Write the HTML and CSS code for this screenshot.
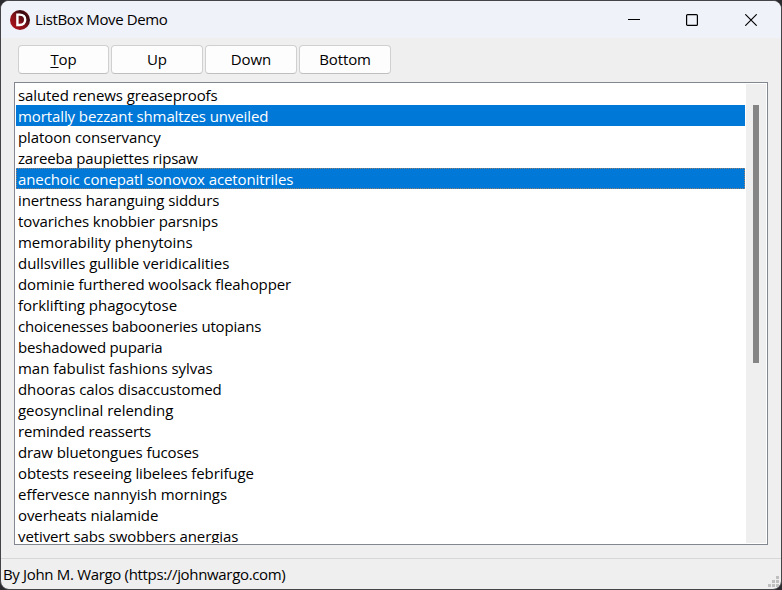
FILE: index.html
```
<!DOCTYPE html>
<html lang="en">
<head>
<meta charset="utf-8">
<title>ListBox Move Demo</title>
<link rel="stylesheet" href="styles.css">
</head>
<body>
<div class="window">
  <header class="titlebar">
    <svg class="logo" width="20" height="20" viewBox="0 0 20 20">
      <defs><linearGradient id="g" x1="0" y1="1" x2="1" y2="0"><stop offset="0" stop-color="#b5121b"/><stop offset=".45" stop-color="#861018"/><stop offset=".75" stop-color="#350b10"/><stop offset="1" stop-color="#a5141c"/></linearGradient></defs>
      <circle cx="10" cy="10" r="10" fill="url(#g)"/>
      <path d="M7.4 4.6V15H9.6C13.2 15 15.2 13.2 15.2 9.8S13.2 4.6 9.6 4.6Z" fill="none" stroke="#fff" stroke-width="2.4"/>
    </svg>
    <h1 class="title">ListBox Move Demo</h1>
    <div class="controls">
      <svg width="12" height="12" viewBox="0 0 12 12"><path d="M0 5.5H12" stroke="#000"/></svg>
      <svg width="12" height="12" viewBox="0 0 12 12"><rect x=".6" y=".6" width="10.8" height="10.8" rx="1" fill="none" stroke="#000" stroke-width="1.2"/></svg>
      <svg width="12" height="12" viewBox="0 0 12 12"><path d="M.3.3 11.7 11.7M11.7.3.3 11.7" stroke="#000" stroke-width="1.15"/></svg>
    </div>
  </header>
  <nav class="toolbar">
    <button class="btn"><span><u>T</u>op</span></button>
    <button class="btn">Up</button>
    <button class="btn">Down</button>
    <button class="btn">Bottom</button>
  </nav>
  <main class="listbox">
    <ul class="items">
      <li>saluted renews greaseproofs</li>
      <li class="selected">mortally bezzant shmaltzes unveiled</li>
      <li>platoon conservancy</li>
      <li class="tight">zareeba paupiettes ripsaw</li>
      <li class="selected focused">anechoic conepatl sonovox acetonitriles</li>
      <li>inertness haranguing siddurs</li>
      <li>tovariches knobbier parsnips</li>
      <li class="loose">memorability phenytoins</li>
      <li class="loose">dullsvilles gullible veridicalities</li>
      <li>dominie furthered woolsack fleahopper</li>
      <li class="loose">forklifting phagocytose</li>
      <li class="tight">choicenesses babooneries utopians</li>
      <li class="tight">beshadowed puparia</li>
      <li class="loose">man fabulist fashions sylvas</li>
      <li>dhooras calos disaccustomed</li>
      <li class="loose">geosynclinal relending</li>
      <li class="tight">reminded reasserts</li>
      <li>draw bluetongues fucoses</li>
      <li>obtests reseeing libelees febrifuge</li>
      <li class="loose">effervesce nannyish mornings</li>
      <li>overheats nialamide</li>
      <li>vetivert sabs swobbers anergias</li>
    </ul>
    <div class="scrollbar"><div class="thumb"></div></div>
  </main>
  <footer class="statusbar">
    <span class="credit">By John M. Wargo (https://johnwargo.com)</span>
    <svg class="grip" width="12" height="12" viewBox="0 0 12 12" fill="#bfbfbf"><path d="M8 0h3v3H8zM4 4h3v3H4zM8 4h3v3H8zM0 8h3v3H0zM4 8h3v3H4zM8 8h3v3H8z"/></svg>
  </footer>
</div>
</body>
</html>
```
FILE: styles.css
```
* { box-sizing: border-box; }
body {
  margin: 0;
  background: #2b2b2f;
  font: 15px/21px "Open Sans", "Noto Sans", sans-serif;
  color: #000;
  overflow: hidden;
}
.window {
  width: 782px;
  height: 590px;
  display: flex;
  flex-direction: column;
  border: 1px solid #444448;
  border-radius: 9px;
  background: #efefef;
  overflow: hidden;
}
.titlebar {
  display: flex;
  flex: 0 0 37px;
  align-items: center;
  padding: 0 24px 0 9px;
  background: #f0f2f9;
}
.logo { margin-right: 5px; }
.title {
  margin: 0;
  font-size: 15px;
  font-weight: 400;
  letter-spacing: -0.4px;
}
.controls {
  display: flex;
  gap: 47px;
  margin-left: auto;
}
.controls svg { display: block; }
.controls svg:first-child { margin-right: -1px; }
.toolbar {
  display: flex;
  gap: 2px;
  padding: 7px 17px 8px;
}
.btn {
  width: 92px;
  height: 29px;
  padding: 0;
  border: 1px solid #d0d0d0;
  border-bottom-color: #bfbfbf;
  border-radius: 4px;
  background: #fdfdfd;
  font: inherit;
  color: inherit;
  letter-spacing: -0.1px;
}
.btn:first-child { width: 91px; }
.btn u { text-underline-offset: 2px; }
.listbox {
  display: flex;
  height: 463px;
  margin: 0 13px;
  padding: 1px;
  border: 1px solid #828790;
  background: #fff;
}
.items {
  flex: 1;
  margin: 0 1px 0 0;
  padding: 0;
  list-style: none;
  overflow: hidden;
  letter-spacing: -0.1px;
}
.items li {
  height: 21px;
  padding-left: 2px;
  line-height: 23px;
  white-space: nowrap;
}
.items .tight { letter-spacing: -0.18px; }
.items .loose { letter-spacing: -0.02px; }
.items .selected { background: #0078d7; color: #fff; }
.items .focused { outline: 1px dotted rgba(255, 135, 40, 0.6); outline-offset: -1px; }
.scrollbar {
  width: 20px;
  padding: 21px 0 0 7px;
  background: #efefef;
}
.thumb { width: 6px; height: 258px; background: #858585; }
.statusbar {
  display: flex;
  height: 31px;
  margin-top: 13px;
  padding-left: 2px;
  border-top: 1px solid #d7d7d7;
  justify-content: space-between;
}
.credit { line-height: 31px; letter-spacing: -0.33px; }
.grip { align-self: flex-end; margin: 0 1px 1px 0; }
```
